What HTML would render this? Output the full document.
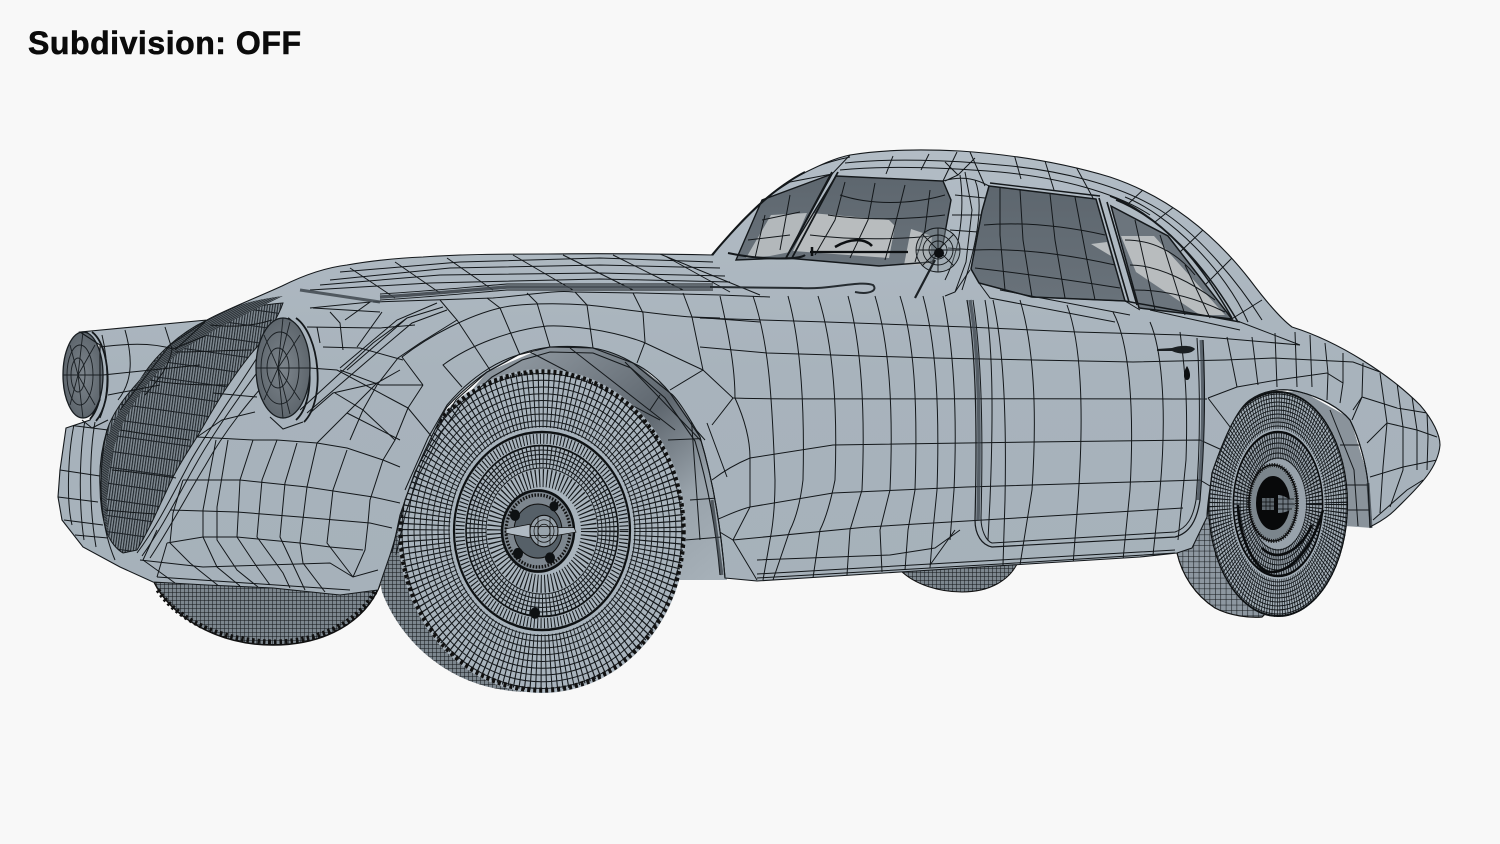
<!DOCTYPE html>
<html><head><meta charset="utf-8"><title>Subdivision: OFF</title>
<style>html,body{margin:0;padding:0;background:#f8f8f8;width:1500px;height:844px;overflow:hidden}svg{display:block}</style></head>
<body>
<svg xmlns="http://www.w3.org/2000/svg" width="1500" height="844" viewBox="0 0 1500 844">
<defs>
<linearGradient id="bd" x1="0" y1="0" x2="0" y2="1"><stop offset="0" stop-color="#b2bcc5"/><stop offset=".5" stop-color="#a8b3bc"/><stop offset="1" stop-color="#a6b1ba"/></linearGradient>
<linearGradient id="well" gradientUnits="userSpaceOnUse" x1="540" y1="350" x2="720" y2="570"><stop offset="0" stop-color="#8a939b"/><stop offset=".42" stop-color="#5f676f"/><stop offset=".72" stop-color="#98a2aa"/><stop offset="1" stop-color="#a6b0b8"/></linearGradient>
<linearGradient id="glass" x1="0" y1="0" x2="0" y2="1"><stop offset="0" stop-color="#5d666e"/><stop offset="1" stop-color="#69727a"/></linearGradient>
<radialGradient id="lens"><stop offset="0" stop-color="#7d858c"/><stop offset="1" stop-color="#5e666d"/></radialGradient>
<pattern id="gr" width="2.6" height="16" patternUnits="userSpaceOnUse" patternTransform="rotate(8)"><rect width="2.6" height="16" fill="#808a92"/><rect width="1.1" height="16" fill="#23292e"/><rect y="15" width="2.6" height="1" fill="#1c2126"/></pattern>
<pattern id="gr2" width="2" height="12" patternUnits="userSpaceOnUse" patternTransform="rotate(-55)"><rect width="2" height="12" fill="#5b6369"/><rect width="1" height="12" fill="#2a3035"/></pattern>
<pattern id="tr" width="5.4" height="5.4" patternUnits="userSpaceOnUse"><rect width="5.4" height="5.4" fill="#8d97a0"/><path d="M0 0H5.4M0 0V5.4" stroke="#14181b" stroke-width="1.1"/></pattern>
<pattern id="trd" width="4" height="4" patternUnits="userSpaceOnUse"><rect width="4" height="4" fill="#7c868e"/><path d="M0 0H4M0 0V4" stroke="#111417" stroke-width="1"/></pattern>
<clipPath id="bc"><path id="bp" d="M80,332 L207,320 C225,310 258,297 282,286 C300,277 322,268 347,265 C375,260 400,258 423,257 C465,254 510,254 547,254 C610,253 665,254 713,255 C735,225 770,190 800,175 C820,165 835,158 850,155 C880,150 920,149 960,151 C1020,155 1070,165 1110,177 C1170,197 1215,235 1250,280 C1265,300 1280,318 1292,327 C1340,342 1390,375 1420,405 C1433,420 1440,435 1440,445 C1438,470 1415,490 1395,510 C1385,520 1375,524 1370,527 L1368,483 C1366,465 1360,440 1350,420 C1340,408 1320,397 1300,392 C1285,388 1265,389 1250,400 C1238,408 1225,435 1212,473 C1210,490 1207,505 1207,517 L1192,548 L1177,553 L1140,557 L900,572 L757,581 L725,578 C722,540 716,490 700,437 C690,418 675,395 670,393 C660,380 645,368 633,363 C620,355 605,350 593,348 C578,346 565,346 550,347 C535,349 525,352 518,355 C505,362 495,368 487,372 C470,384 458,395 447,407 C440,418 435,430 430,440 C420,460 412,480 405,500 C400,520 395,540 390,555 L378,590 L340,595 L273,588 L207,585 L153,582 L120,567 L83,547 L62,520 L58,497 L60,470 L66,428 L90,420 L100,400 L100,345 Z"/></clipPath>
</defs>
<rect width="1500" height="844" fill="#f8f8f8"/>

<!-- far wheels -->
<path d="M154,582 C170,615 215,645 273,645 C325,645 365,622 380,585 Z" fill="url(#trd)" stroke="#111" stroke-width="1.5"/>
<path d="M158,590 C176,618 218,641 273,642 C325,642 362,618 376,590" fill="none" stroke="#111" stroke-width="5" stroke-dasharray="2.5 3"/>
<path d="M900,570 C915,585 940,592 962,592 C990,592 1010,580 1018,562 Z" fill="url(#trd)" stroke="#111"/>

<!-- wheel wells -->
<path d="M400,560 L430,440 L487,372 L550,345 L593,346 L633,361 L670,391 L702,437 C718,490 724,540 727,580 L650,580 Z" fill="url(#well)"/>
<g fill="none" stroke="#15191c"><path d="M530,352 L660,420M570,348 L675,430M625,362 L705,445M660,395 L650,410M668,440 L715,438M690,500 L718,498M685,540 L722,537M690,400 L700,540"/></g>
<path d="M1225,430 L1250,398 L1300,390 L1350,418 L1370,483 L1372,528 L1345,526 L1345,480 Z" fill="#8a939b"/>
<g fill="none" stroke="#15191c"><path d="M1340,445 L1366,445M1345,485 L1368,485M1345,510 L1369,510M1330,410 L1354,470 L1358,526"/></g>

<!-- FRONT WHEEL -->
<path d="M398,505 C385,550 378,575 382,592 C400,640 450,692 530,692 L560,660 L430,520 Z" fill="url(#trd)"/>
<g transform="translate(542,531) scale(1,1.125)">
<circle r="144" fill="#a8b3bc"/>
<g fill="none" stroke="#14181b" stroke-width=".9">
<circle r="140"/><circle r="134"/><circle r="128"/><circle r="122"/><circle r="116"/><circle r="110"/><circle r="104"/><circle r="98"/><circle r="93"/>
</g>
<circle r="117" fill="none" stroke="#14181b" stroke-width="50" stroke-dasharray="1 3.6"/>
<circle r="141.5" fill="none" stroke="#111" stroke-width="4.5" stroke-dasharray="3 3"/>
<circle r="88" fill="none" stroke="#0e1113" stroke-width="2.2"/>
<circle r="76" fill="#a8b3bc" stroke="#0e1113" stroke-width="1.6"/>
<circle r="82" fill="none" stroke="#14181b" stroke-width="9" stroke-dasharray="1 2.4"/>
<g fill="none" stroke="#14181b" stroke-width=".9"><circle r="72"/><circle r="68"/><circle r="64"/><circle r="60"/><circle r="56"/></g>
<circle r="66" fill="none" stroke="#14181b" stroke-width="20" stroke-dasharray="1 2.8"/>
<circle r="47" fill="none" stroke="#14181b" stroke-width="16" stroke-dasharray="1.1 2.6"/>
<circle cx="-4" r="36" fill="#7d868e" stroke="#0e1113" stroke-width="2.5"/>
<circle cx="-4" r="32" fill="none" stroke="#111" stroke-width="3" stroke-dasharray="1.5 1.5"/>
<circle cx="-4" r="24" fill="#566068" stroke="#111"/>
<circle cx="-27" cy="-14" r="5" fill="#0e1113"/><circle cx="12" cy="-22" r="4.5" fill="#0e1113"/><circle cx="-24" cy="20" r="5" fill="#0e1113"/><circle cx="8" cy="24" r="5" fill="#0e1113"/>
<path d="M-36,-2 L-12,-6 L-12,6 L-36,2 Z" fill="#b0bac3" stroke="#111" stroke-width=".7"/>
<path d="M14,-3 L32,-3 L34,1 L14,4 Z" fill="#b0bac3" stroke="#111" stroke-width=".7"/>
<circle cx="2" r="14" fill="#98a3ac" stroke="#111"/>
<g fill="none" stroke="#111" stroke-width=".7"><circle cx="2" r="10"/><circle cx="2" r="6"/><path d="M-12,-4H16M-12,4H16M-4,-13V13M8,-13V13"/></g>
<circle cx="-7" cy="73" r="5" fill="#0e1113"/>
</g>

<!-- REAR WHEEL -->
<path d="M1177,553 C1182,575 1195,595 1215,608 C1230,616 1250,618 1262,617 L1290,590 L1215,500 Z" fill="url(#tr)" stroke="#111" stroke-width="1.2"/>
<g transform="translate(1278,504) scale(.62,1)">
<circle r="113" fill="#a2adb6"/>
<g fill="none" stroke="#111518" stroke-width=".9"><circle r="110"/><circle r="106"/><circle r="102"/><circle r="98"/><circle r="94"/><circle r="90"/><circle r="86"/><circle r="82"/><circle r="78"/></g>
<circle r="94" fill="none" stroke="#111518" stroke-width="38" stroke-dasharray="1.1 2.6"/>
<circle r="112" fill="none" stroke="#0e1113" stroke-width="2"/>
<circle r="72" fill="#98a2ab" stroke="#0a0c0e" stroke-width="2.5"/>
<g fill="none" stroke="#111518" stroke-width="1"><circle r="66"/><circle r="61"/><circle r="56"/><circle r="51"/><circle r="46"/></g>
<circle r="58" fill="none" stroke="#111518" stroke-width="26" stroke-dasharray="1.1 2.2"/>
</g>
<path d="M1238,505 C1240,540 1255,570 1270,572 C1290,573 1312,550 1323,510" fill="none" stroke="#0a0c0e" stroke-width="2.6"/>
<path d="M1262,548 C1275,562 1298,555 1312,525" fill="none" stroke="#0a0c0e" stroke-width="2.6"/>
<ellipse cx="1273" cy="503" rx="24" ry="38" fill="#7b858c" stroke="#0a0c0e" stroke-width="1.5"/>
<ellipse cx="1273" cy="503" rx="24" ry="38" fill="none" stroke="#111" stroke-width="4" stroke-dasharray="1 1.4"/>
<ellipse cx="1273" cy="503" rx="17" ry="27" fill="#08090a"/>
<path d="M1278,495 C1284,495 1292,500 1295,505 C1291,511 1284,513 1278,513 Z" fill="#6f7981"/>
<path d="M1262,498 H1274 V510 H1262 Z" fill="#5d666d"/>
<path d="M1278,499H1294M1278,504H1295M1278,509H1292M1283,495V513M1288,497V511M1262,502H1274M1262,506H1274M1266,498V510M1270,498V510" stroke="#0a0c0e" stroke-width=".7" fill="none"/>

<!-- BODY -->
<use href="#bp" fill="url(#bd)"/>

<!-- glass -->
<path d="M736,260 L762,200 L832,174 L786,258 Z" fill="url(#glass)"/>
<path d="M836,176 L943,181 L951,200 L943,244 L932,262 L879,266 L786,258 Z" fill="url(#glass)"/>
<path d="M989,186 L1096,199 L1125,301 L1032,297 L979,283 L971,269 L982,211 Z" fill="url(#glass)"/>
<path d="M1111,206 L1168,236 L1232,319 L1139,308 Z" fill="#6c757d"/>
<path d="M746,258 L771,215 L807,213 L790,252 L770,256 Z" fill="#b3b8bb"/>
<path d="M811,213 L889,220 L895,226 L889,258 L793,251 Z" fill="#b8bcbe"/>
<path d="M911,229 L932,236 L929,265 L904,265 Z" fill="#b8bcbe"/>
<path d="M1091,244 L1107,242 L1111,256 Z" fill="#b8bcbe"/>
<path d="M1121,236 L1154,236 L1225,315 L1200,315 L1136,272 Z" fill="#b8bcbe"/>

<g clip-path="url(#bc)">
<!-- GRILLE -->
<path d="M283,303 C255,305 230,312 207,320 C180,333 155,355 140,380 C122,400 112,415 107,430 C101,450 99,470 100,487 C100,505 103,520 107,533 C112,545 118,550 123,553 L137,550 C143,540 148,530 153,520 C160,505 167,490 173,477 C182,460 190,448 197,437 C207,420 217,402 227,387 C237,372 247,358 257,347 C268,332 278,318 283,303 Z" fill="url(#gr)" stroke="#15191c"/>
<path d="M283,296 C250,300 225,308 207,320 C178,335 150,362 132,392 C118,412 108,430 103,455 C99,480 101,515 110,540 C103,500 108,460 120,430 C135,395 160,365 190,345 C220,325 255,310 283,296 Z" fill="url(#gr2)"/>
<g fill="none" stroke="#14181b" stroke-width="1">
<path d="M120,430 C140,433 165,437 190,440M112,470 C135,472 155,475 176,478M105,510 C125,512 140,513 156,514M150,380 C175,385 205,385 228,385M175,352 C205,352 230,350 252,350M210,325 C230,327 250,327 272,320"/>
<path d="M137,553 C158,525 175,490 190,462 C205,435 240,385 262,350M142,556 C164,525 181,490 196,464 C212,435 245,388 268,358M150,558 C170,528 190,490 205,466 C225,430 250,400 275,372"/>
<path d="M197,437 L222,420 L255,412M213,393 L257,397M207,320 L170,345 L120,410"/>
</g>
<!-- mesh -->
<g fill="none" stroke="#13171a" stroke-width="1">
<!-- left tube -->
<path d="M102,335 C108,360 110,395 100,418"/><path d="M125,330 C132,355 134,380 118,400"/><path d="M165,327 L172,349 C170,365 160,378 145,395"/>
<path d="M100,347 C125,344 150,342 173,349 L205,336M103,375 L200,365 M108,395 L160,385"/><path d="M205,322 L175,350"/>
<path d="M60,470 L100,476M58,497 L98,502M64,520 L103,525M68,425 L108,430M75,535 L108,538"/>
<path d="M75,420 C68,450 66,500 72,525 M85,420 C80,450 78,500 84,540 M95,422 C90,450 88,500 96,547M107,430 C98,470 98,520 115,560"/>
<!-- fender horizontals -->
<path d="M197,437 L253,440 L277,440 L317,443 L347,448 L383,460 L400,467"/>
<path d="M183,480 L240,480 L307,487 L373,497 L400,503"/>
<path d="M170,510 L237,512 L300,517 L370,523 L392,528"/>
<path d="M167,543 L203,537 L237,537 L300,543 L330,547 L363,550"/>
<path d="M140,560 L203,567 L330,563 L353,577 L378,570"/>
<path d="M157,577 L350,590"/>
<!-- fender verticals -->
<path d="M253,440 L240,480 L237,537 L257,567 L270,585"/>
<path d="M277,440 L262,480 L257,537 L283,573 L290,588"/>
<path d="M297,443 L285,483 L280,537 L297,573 L305,590"/>
<path d="M317,443 L307,487 L300,543 L303,563 L325,592"/>
<path d="M347,450 L333,490 L327,543 L353,577"/>
<path d="M383,460 L370,500 L368,523 L365,550 L353,577"/>
<path d="M216,440 L203,510 L203,537 L217,567 L240,586"/>
<path d="M228,440 L217,507 L217,540 L237,570 L258,587"/>
<path d="M173,513 L170,543 L190,563 L220,587"/>
<path d="M183,480 L173,513M157,530 L143,560 L175,583M167,543 L157,577"/>
<!-- fender rings -->
<path d="M518,355 C495,362 470,378 447,405 L428,438 L405,490"/>
<path d="M462,387 L443,365 C470,345 510,330 547,326 C570,325 610,330 643,342 L703,370"/>
<path d="M423,385 L402,357 C430,335 470,315 500,308 C520,303 560,303 587,305 C610,307 660,315 692,317 L760,322"/>
<path d="M432,437 L408,408 L395,440 L383,460M408,408 L423,385"/>
<path d="M363,410 L377,385 L398,358 L420,343 L457,320"/>
<path d="M350,440 L363,410 L335,393M395,440 L363,410"/>
<path d="M310,368 L337,370 L393,400 L408,408"/>
<path d="M340,370 L380,385 L423,385"/>
<path d="M323,347 L360,348 L403,360"/>
<path d="M307,327 L380,328 L415,325"/>
<path d="M343,350 L340,323 L330,312M320,343 L317,327"/>
<path d="M382,312 L357,347"/>
<path d="M313,308 L380,312"/>
<path d="M310,413 L333,393 L377,383 L400,370M317,443 L347,413 L377,383M347,413 L400,440"/>
<path d="M300,410 L373,343 L407,318 L443,307M307,413 L380,350 L412,323 L447,310M347,370 L407,318M340,368 L397,320 L437,303"/>
<path d="M490,370 L457,320 L440,300M520,355 L500,308 L487,298M550,347 L537,303 L527,293M593,348 L587,305 L575,292M637,363 L645,342 L643,313 L633,293M670,390 L703,370 L692,317 L683,293"/>
<path d="M703,370 L733,398L712,425M707,423 L727,477M665,395 L705,440"/>
<path d="M692,317 L720,318"/>
<path d="M310,308 L370,302L345,320"/>
<!-- hood -->
<path d="M340,272 L460,262 L600,258 L713,262M330,280 L450,268 L600,265 L720,268M320,285 L440,275 L600,273 L725,276M310,290 L430,283 L600,279 L730,282M373,302 L493,298 C530,295 555,290 573,292 L640,293 L720,295 L770,297"/>
<path d="M447,258 L493,290M513,255 L573,290M563,255 L633,290M613,255 L683,290M665,256 L730,292M395,262 L440,293M350,268 L395,298M660,254 L760,295"/>
<!-- side verticals -->
<path d="M720,296 C730,340 735,370 735,398 C745,420 750,440 750,458 L750,507 L733,540 L757,580"/>
<path d="M753,296 C768,340 772,390 775,480 C775,510 772,530 770,540 L763,580"/>
<path d="M788,296 C800,340 805,400 803,480 C800,505 795,520 790,530 L773,580"/>
<path d="M818,296 C832,340 838,400 835,480 C830,505 825,520 820,530 L813,578"/>
<path d="M848,296 C860,340 866,400 862,490 L850,530 L847,575"/>
<path d="M875,296 C888,340 894,400 890,490 L880,530 L882,572"/>
<path d="M900,296 C914,340 918,400 915,490 L908,530 L905,570"/>
<path d="M923,296 C935,340 940,400 937,490 L933,530 L930,568"/>
<path d="M943,296 C952,340 958,400 954,490 L950,540"/>
<path d="M985,300 C992,340 994,400 990,500 L988,540"/><path d="M993,300 C1002,340 1007,400 1005,500 L1003,565"/>
<path d="M1020,300 C1032,340 1038,400 1032,490 L1020,565"/><path d="M1067,305 C1080,340 1085,400 1078,500 L1073,565"/>
<path d="M1113,312 C1128,340 1135,400 1130,490 L1123,560"/><path d="M1150,322 C1160,345 1168,400 1160,490 L1153,555"/><path d="M1180,332 C1185,370 1188,400 1186,460 L1178,540"/>
<!-- side horizontals -->
<path d="M700,318 L827,322 L967,327 L1077,332 L1183,335 L1300,345"/>
<path d="M700,347 L767,353 L933,358 L1133,362 L1225,360 L1273,358 L1353,362 L1380,372"/>
<path d="M733,398 C780,400 900,398 1207,399"/>
<path d="M712,480 C725,470 738,463 750,458 L833,445 L1033,442 L1200,440 L1222,450"/>
<path d="M716,520 C728,515 738,510 750,507 L833,493 L967,487 L1200,480 L1210,486"/>
<path d="M713,528 L733,540 L867,527 L1033,517 L1183,508"/>
<path d="M757,560 L890,555 L935,548 L960,530M930,565 L955,530"/>
<path d="M757,574 L1000,560 L1175,550M757,578 L1000,564 L1175,553"/>
<!-- roof -->
<path d="M832,174 L850,155M886,174 L893,156M921,170 L929,154M943,181 L957,152M985,186 L970,152M1021,179 L1014,154M1054,190 L1045,161M1093,198 L1075,165M1127,205 L1145,188M1155,222 L1180,202M1180,252 L1205,228M1205,285 L1232,258M1230,320 L1262,300"/>
<path d="M845,163 C890,158 950,160 1000,165 C1060,170 1120,185 1160,210 C1200,235 1240,285 1262,320"/>
<path d="M840,170 C890,165 950,168 1000,172 C1060,178 1115,192 1150,215"/>
<path d="M1125,197 C1170,215 1225,270 1248,322"/>
<path d="M762,200 L790,182 L832,174"/><path d="M775,185 C800,172 825,162 850,157"/>
<path d="M943,181 C965,175 978,180 989,186M945,162 L958,175 L945,181M958,175 L975,158M955,195 L985,198M952,215 L982,215M950,230 L978,232M948,248 L975,250M960,175 C965,210 960,250 945,280M975,180 C985,205 975,250 962,290M965,172 L972,210 L966,262 L955,292"/>
<path d="M970,270 L955,292 L945,296M979,283 L990,298 L1115,322"/>
<path d="M1032,297 L1125,301M1000,290 L1130,315M1150,310 L1240,330M1240,322 L1300,345M1125,301 L1140,310"/>
<!-- glass mesh -->
<path d="M845,182 L835,220 L815,255M875,183 L868,220 L850,258M905,185 L895,225 L885,260M930,190 L925,230 L915,262M840,195 C870,205 910,205 945,195M828,215 C860,220 905,220 945,215M810,235 C850,240 900,240 940,235"/>
<path d="M1020,190 L1023,240 L1032,297M1050,194 L1055,240 L1065,298M1075,197 L1085,250 L1095,300M1000,188 L1000,235 L1005,290M984,225 C1020,222 1060,225 1105,235M975,250 C1020,248 1070,255 1115,265M975,268 C1010,272 1070,280 1120,288"/>
<path d="M1135,220 L1155,310M1160,235 L1185,315M1185,265 L1210,318M1125,240 C1150,240 1175,250 1195,275M1130,265 C1160,265 1195,285 1215,300M1135,290 C1170,290 1200,300 1225,312"/>
<path d="M765,215 L755,258M790,195 L780,250M748,240 L790,235M762,220 L800,212"/>
<!-- rear quarter -->
<path d="M1227,337 L1237,387M1252,337 L1258,385M1275,333 L1277,387M1295,332 L1297,387M1310,335 L1312,387M1325,343 L1328,373 L1327,400M1343,353 L1343,383 L1340,403M1363,363 L1362,397 L1352,420M1380,373 L1387,423 L1383,467 L1380,513M1397,383 L1403,427 L1403,470 L1390,507M1412,397 L1417,430 L1417,470M1427,413 L1428,437 L1427,470"/>
<path d="M1208,398 L1237,387 L1277,380 L1327,373 L1343,383M1353,410 L1362,397 L1397,408 L1427,413M1367,443 L1387,423 L1417,430 L1437,437M1370,477 L1403,467 L1437,460M1373,520 L1407,490 L1423,480M1208,398 L1240,440"/>
</g>
</g>

<!-- thick door seams -->
<g fill="none" stroke="#15191c">
<path d="M967,300 C974,340 978,400 975,520 C975,535 982,545 992,547 L1175,537 C1190,533 1197,520 1200,500 C1204,450 1206,400 1203,340" stroke-width="1.2"/>
<path d="M973,300 C979,340 984,400 981,518 C981,530 986,541 992,543 L1175,532 C1187,528 1193,518 1196,500 C1200,450 1201,400 1197,338" stroke-width="1"/>
<path d="M970,300 C977,340 981,400 978,520" stroke="#39414a" stroke-width="3.5" opacity=".75"/>
<path d="M1201,340 C1204,400 1203,450 1198,500" stroke="#39414a" stroke-width="3" opacity=".7"/>
</g>
<path d="M380,297 C420,295 470,290 507,287 L713,287" fill="none" stroke="#3a4147" stroke-width="3.4" opacity=".85"/>
<path d="M300,290 L380,302" fill="none" stroke="#3a4147" stroke-width="3" opacity=".8"/>
<path d="M380,294 C420,292 470,287 507,284 L713,284M380,300 C420,298 470,293 507,290 L713,290" fill="none" stroke="#14181b" stroke-width=".9"/>
<path d="M710,287 L800,288 C830,290 860,280 873,285 C878,290 870,295 855,292" fill="none" stroke="#262c31" stroke-width="2"/>
<!-- arch lip -->
<g fill="none" stroke="#15191c" stroke-width="1.1">
<path d="M392,553 L400,515 L415,472 L437,430 L456,400 L487,372 L518,355 L550,347 L593,348 L633,363 L670,393 L700,437 C716,490 722,540 725,578"/>
<path d="M396,555 L405,515 L419,475 L441,433 L461,405 L492,377 L522,360 L550,352 L593,353 L631,368 L665,398 L695,441 C711,495 717,540 720,575"/>
<path d="M1207,517 L1212,473 C1225,435 1238,408 1250,400 C1265,389 1285,388 1300,392 C1320,397 1340,408 1350,420 C1360,440 1366,465 1368,483 L1370,527"/>
</g>
<path d="M712,500 L722,575" stroke="#30373d" stroke-width="3" opacity=".7"/>
<path d="M1368,483 L1371,528" stroke="#30373d" stroke-width="3" opacity=".7"/>

<!-- window frames -->
<g fill="none" stroke="#14181b">
<path d="M736,260 L762,200 L832,174 L786,258 Z" stroke-width="1.4"/>
<path d="M836,176 L943,181 L951,200 L943,244 L932,262 L879,266 L786,258 Z" stroke-width="1.4"/>
<path d="M832,172 L786,258 M838,172 L792,258" stroke-width="1.8"/>
<path d="M989,186 L1096,199 L1125,301 L1032,297 L979,283 L971,269 L982,211 Z" stroke-width="1.5"/>
<path d="M1111,206 L1168,236 L1232,319 L1139,308 Z" stroke-width="1.5"/>
<path d="M1099,198 L1129,302M1107,202 L1137,305" stroke-width="1.6"/>
<path d="M1110,196 C1160,215 1205,265 1238,322M1116,200 C1165,220 1200,262 1232,318" stroke-width="1.5"/>
<path d="M990,183 L1100,196" stroke-width="1.4"/>
<path d="M1125,301 L1240,322" stroke-width="1.5"/>
<path d="M728,253 C760,260 800,260 805,255" stroke-width="2"/>
<path d="M712,255 C740,222 770,190 805,172" stroke-width="2"/>
</g>
<!-- mirror / wiper -->
<circle cx="938" cy="250" r="22" fill="#8d979f" opacity=".35"/>
<g fill="none" stroke="#14181b" stroke-width=".9"><circle cx="938" cy="250" r="22"/><circle cx="938" cy="250" r="15"/><circle cx="938" cy="250" r="9"/><path d="M916,250H960M938,228V272M922,234L954,266M954,234L922,266"/></g>
<circle cx="939" cy="253" r="5" fill="#0c0e10"/>
<path d="M935,260 L915,298" stroke="#1c2125" stroke-width="2.2"/>
<path d="M810,252 L908,252" stroke="#0d1012" stroke-width="2.2"/>
<path d="M812,247 L812,256M835,247 C850,238 865,238 872,246" fill="none" stroke="#0d1012" stroke-width="2.5"/>
<!-- door handle -->
<path d="M1157,349 L1172,348 C1180,345 1192,345 1195,349 C1192,354 1180,355 1172,351 L1157,351 Z" fill="#1a1f22"/>
<path d="M1187,366 C1191,372 1191,380 1187,380 C1183,380 1183,372 1187,366 Z" fill="#0d1012"/>

<!-- headlights -->
<path d="M86,332 C104,345 108,400 90,419M92,332 C110,345 114,400 96,421" fill="none" stroke="#14181b" stroke-width="1.8"/>
<ellipse cx="83" cy="375" rx="20" ry="43" fill="url(#lens)" stroke="#181d21" stroke-width="1.3"/>
<g fill="none" stroke="#1a1f23" stroke-width=".9"><ellipse cx="80" cy="375" rx="13" ry="30"/><ellipse cx="78" cy="375" rx="7" ry="17"/><path d="M63,375H103M83,332L78,375L83,418M70,345L78,375L70,405M95,345L78,375L95,405"/></g>
<path d="M288,318 C312,335 318,400 296,420M296,318 C320,335 326,400 304,422" fill="none" stroke="#14181b" stroke-width="1.8"/>
<ellipse cx="283" cy="368" rx="27" ry="50" fill="url(#lens)" stroke="#181d21" stroke-width="1.3"/>
<g fill="none" stroke="#1a1f23" stroke-width=".9"><ellipse cx="280" cy="368" rx="19" ry="36"/><ellipse cx="278" cy="368" rx="11" ry="20"/><path d="M256,368H310M283,318L278,368L283,418M264,335L278,368L264,400M300,335L278,368L300,400M290,322L278,368L290,414"/></g>
<path d="M82,420 L92,428 L108,420M270,417 L283,429 L303,422" fill="none" stroke="#14181b" stroke-width="1.1"/>

<!-- body outline -->
<use href="#bp" fill="none" stroke="#14181b" stroke-width="1.1"/>

<text x="28" y="54" font-family="'Liberation Sans',sans-serif" font-weight="700" font-size="32" textLength="273" lengthAdjust="spacing" fill="#0b0b0b" stroke="#0b0b0b" stroke-width=".6">Subdivision: OFF</text>
</svg>
</body></html>
